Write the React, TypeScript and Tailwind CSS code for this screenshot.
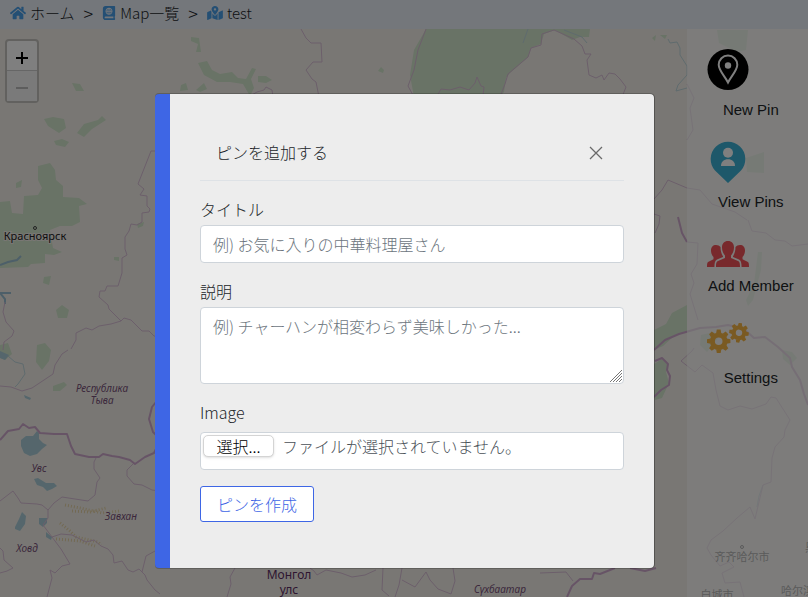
import React from "react";
import { FaHome, FaAtlas, FaMapMarkedAlt } from "react-icons/fa";

const UI = "font-['Noto_Sans_CJK_JP',sans-serif]";

const forests = [
  "M410 75 L414 50 L426 29 L590 29 L589 37 L580 37 L572 40 L555 30 L544 34 L541 44 L531 48 L528 57 L510 73 L506 78 L504 92 L500 97 L414 97 Z",
  "M38 166 L50 163 L55 170 L56 180 L63 186 L63 197 L79 198 L87 204 L79 206 L80 222 L72 226 L60 226 L50 230 L53 248 L62 252 L54 255 L45 254 L45 263 L31 264 L28 267 L0 268 L0 202 L10 201 L12 213 L23 214 L24 196 L38 195 L42 188 L38 180 Z",
  "M44 119 L53 117 L64 119 L66 128 L59 133 L48 126 Z",
  "M77 133 L84 124 L98 120 L102 116 L106 120 L92 129 L84 137 Z",
  "M54 141 L62 139 L69 142 L65 147 L56 145 Z",
  "M16 183 L22 180 L21 187 L16 188 Z",
  "M44 277 L51 276 L49 285 L43 283 Z",
  "M56 310 L62 305 L69 310 L67 318 L58 318 Z",
  "M37 345 L45 343 L51 350 L49 361 L42 370 L36 362 Z",
  "M0 345 L8 343 L12 354 L5 360 L0 358 Z",
  "M53 386 L64 382 L67 385 L60 391 L53 391 Z",
  "M72 83 L80 84 L84 91 L76 91 Z",
  "M191 37 L199 38 L201 52 L196 52 L198 44 L191 41 Z",
  "M198 63 L207 61 L212 70 L220 74 L232 72 L238 78 L246 79 L252 68 L256 69 L251 79 L254 88 L250 96 L243 84 L230 82 L217 82 L204 75 Z",
  "M258 76 L266 76 L272 80 L266 83 L258 82 Z",
  "M181 85 L186 83 L188 90 L180 91 Z M196 90 L204 83 L207 89 L200 92 Z",
  "M654 364 L662 359 L668 365 L666 372 L669 383 L662 398 L655 400 L654 397 Z",
  "M654 330 L666 324 L672 313 L687 305 L687 332 L674 336 L663 346 L654 350 Z",
  "M717 30 L748 30 L746 50 L737 52 L719 43 Z",
  "M746 158 L764 152 L764 173 L747 172 Z",
  "M758 252 L762 252 L761 270 L753 300 L748 306 L746 300 L754 284 Z",
  "M782 350 L792 352 L797 358 L790 365 L783 359 Z",
  "M701 335 L714 332 L718 338 L707 352 L700 345 Z",
  "M378 71 L381 67 L384 70 L383 73 Z M652 38 L656 35 L655 41 Z M660 35 L667 35 L665 39 Z",
  "M137 224 L144 222 L143 226 L138 228 Z M114 257 L119 257 L119 261 L114 260 Z",
];

const waters = [
  "M21 440 L26 436 L33 436 L37 431 L39 433 L39 439 L43 443 L47 445 L42 449 L37 454 L30 456 L24 453 L21 446 Z",
  "M34 479 L38 478 L46 483 L54 483 L57 486 L52 489 L47 491 L43 487 L37 485 Z",
  "M15 527 L19 519 L22 512 L26 516 L25 524 L20 531 L15 529 Z",
  "M39 518 L47 518 L47 523 L43 527 L39 524 Z",
  "M46 532 L52 537 L51 540 L46 537 Z",
  "M24 395 L31 398 L30 400 L25 398 Z",
  "M0 351 L9 355 L5 360 L0 358 Z",
];

const rivers = [
  "M0 265 L8 262 L17 260 L21 256",
  "M0 293 L5 299 L5 304 M0 293 L11 293",
];

const streams = [
  "M8 356 L15 362 L23 364 L25 374 L18 384 L15 387",
  "M564 30 L582 37 L587 43 M528 29 L523 43",
  "M668 39 L670 43 L677 42 L680 48 L680 55 L687 66 L687 75 L678 85 L676 91 L687 88",
  "M763 485 L759 496 L757 507",
];

const regionBorders = [
  "M160 151 L151 151 L138 184 L144 189 L140 195 L147 196 L147 206 L150 209 L149 212 L142 213 L142 222 L137 225 L131 224 L129 231 L125 237 L125 249 L127 255 L122 258 L122 273 L118 286 L107 286 L105 291 L100 291 L99 297 L108 305 L109 309 L121 321 L124 318 L131 320 L142 331 L149 331 L154 336 L160 337",
  "M121 321 L111 324 L99 326 L92 330 L86 328 L76 333 L76 340 L71 349",
  "M5 302 L3 312 L6 322 L14 331 L12 336 L4 342 L3 350",
  "M0 386 L11 387 L22 391 L32 388 L53 374 L55 365 L62 354 L68 350",
  "M0 501 L13 491 L18 498 L21 503 L37 504 L42 505 L48 510 L54 503 L62 497 L88 501 L95 495 L97 482 L100 478 L94 469 L94 462 L96 458",
  "M48 510 L48 518 L43 525 L52 537 L61 534 L72 535 L86 542 L94 540 L101 546 L108 549 L113 555 L114 563 L122 561 L128 570 L133 572 L139 569 L145 575 L147 580 L155 590 L160 594",
  "M52 537 L61 549 L67 559 L70 564 L62 566 L55 573 L50 570 L52 578 L47 597",
  "M134 463 L127 470 L127 476 L134 484 L142 485 L152 490 L160 491",
  "M0 548 L3 551 L4 560 L13 568 L7 571 L0 573",
  "M142 572 L146 556 L155 551",
  "M301 29 L306 38 L311 43 L321 43 L322 62 L313 62 L306 70 L312 79 L316 82 L319 97",
  "M250 96 L257 92 L264 90 L266 87 L272 90 L273 97",
  "M437 96 L441 89 L450 90 L460 87 L469 90 L475 83 L477 77 L481 86 L484 87 L483 96",
  "M500 97 L505 84 L508 74 L528 57 L531 48 L541 45 L542 34 L554 30 L574 39 L582 46 L585 54 L591 54 L587 60 L589 75 L596 78 L602 75 L604 80 L609 73 L615 74 L620 79 L626 87 L622 97",
  "M414 97 L408 86 L414 70 L418 50 L426 29",
  "M235 568 L230 577 L231 584 L227 597 M310 568 L314 571 L317 575 L326 570 L341 573 L352 577 L365 575 L376 570",
  "M383 568 L382 590 L389 596 M402 568 L399 585 L395 597 M402 580 L415 587 L426 572 L430 580 L438 589 L451 594 L455 581 L453 568",
  "M654 199 L662 190 L668 180 L687 188 M654 214 L660 216 L659 224 L655 233",
  "M540 573 L566 572 L573 581",
  "M748 220 L752 231 L766 233 L775 240 L785 241 L792 246 L808 244",
  "M681 361 L692 351 L694 348 M681 361 L695 372 L702 365 L713 373 L716 390 L720 406 L728 410 L740 406 L752 409 L766 404 L771 397 L776 398 L790 420 L785 430 L784 437 L775 447 L772 458 L771 482 L763 485 L755 519 L750 507 L737 518 L723 531 L711 540 L707 548 L711 555 L720 566 L729 562 L734 567 L722 573 L725 583 L740 582 L744 597",
  "M687 84 L694 98 L690 108 L693 130 L687 140",
  "M687 242 L698 243 L697 264 L691 274 L694 283 L690 294 L698 320",
  "M687 188 L700 190 L712 204 L735 212 L747 220",
];

const countryBorders = [
  "M0 440 L8 431 L19 429 L23 424 L29 428 L35 427 L40 433 L54 434 L67 434 L71 446 L75 454 L89 457 L99 457 L103 454 L112 456 L119 457 L130 460 L135 464 L145 457 L154 453 L157 447",
  "M156 402 L152 407 L149 419 L153 432 L156 435",
  "M630 568 L645 571 L656 568 M615 568 L600 574 L594 573 L592 579 L580 579 L572 586 L567 597",
  "M654 397 L661 390 L669 385 L670 376 L667 370 L668 364 L662 358 L655 361",
  "M654 350 L665 340 L679 334 L700 328 L716 327 L728 325 L744 329 L754 338 L765 337 L778 347 L790 358 L792 367 L800 380 L804 394 L808 405",
  "M678 217 L682 233 L687 242",
];

function MapCanvas() {
  return (
    <svg className="absolute inset-0 h-full w-full" aria-hidden="true">
      <g fill="#d2e6cc">
        {forests.map((d) => <path key={d} d={d} />)}
      </g>
      <g fill="none" stroke="#e6d3a6" strokeWidth="3" strokeDasharray="1 2">
        <path d="M65 505 L80 508 L102 513 L120 511" />
        <path d="M72 511 L90 512 L106 508" />
        <path d="M60 523 L70 531 L76 537 L98 542 L101 545" />
        <path d="M56 539 L80 541 L95 546" />
      </g>
      <g fill="#aacdd8">
        {waters.map((d) => <path key={d} d={d} />)}
      </g>
      <g fill="none" stroke="#9abfd2" strokeWidth="2">
        {rivers.map((d) => <path key={d} d={d} />)}
      </g>
      <g fill="none" stroke="#bfd6dc" strokeWidth="1">
        {streams.map((d) => <path key={d} d={d} />)}
      </g>
      <g fill="none" stroke="#d9bed6" strokeWidth="1">
        {regionBorders.map((d) => <path key={d} d={d} />)}
      </g>
      <g fill="none" stroke="#cfa9cd" strokeWidth="2" strokeLinejoin="round">
        {countryBorders.map((d) => <path key={d} d={d} />)}
      </g>
      <g fill="none" stroke="#444">
        <circle cx="35" cy="228" r="1.5" />
        <circle cx="742" cy="547" r="1.5" />
      </g>
      <g
        className="font-['Noto_Sans',sans-serif]"
        textAnchor="middle"
        stroke="#f2efe9"
        strokeWidth="2"
        style={{ paintOrder: "stroke" }}
      >
        <text x="35" y="240" fontSize="11" fill="#222">Красноярск</text>
        <g fontSize="10" fontStyle="italic" fill="#785078">
          <text x="102" y="392">Республика</text>
          <text x="102" y="404">Тыва</text>
          <text x="39" y="472">Увс</text>
          <text x="121" y="520">Завхан</text>
          <text x="27" y="552">Ховд</text>
          <text x="500" y="593">Сүхбаатар</text>
        </g>
        <g fontSize="12" fill="#5c2d62">
          <text x="289" y="579">Монгол</text>
          <text x="289" y="594">улс</text>
        </g>
      </g>
      <g className="font-['Noto_Sans_CJK_SC',sans-serif]" textAnchor="middle" fontSize="11" fill="#444">
        <text x="742" y="561">齐齐哈尔市</text>
        <text x="717" y="599">白城市</text>
        <text x="781" y="595" textAnchor="start">哈尔滨市</text>
        <text x="805" y="552" textAnchor="start">黑</text>
        <text x="-4" y="329">у</text>
      </g>
    </svg>
  );
}

function NewPinIcon() {
  return (
    <svg width="42" height="42" viewBox="0 0 42 42" aria-hidden="true">
      <circle cx="21" cy="20.500" r="20.500" fill="#000" />
      <path
        d="M21 33.500 C18 27.500 11.700 21.500 11.700 15.800 A9.300 9.300 0 0 1 30.300 15.800 C30.300 21.500 24 27.500 21 33.500Z"
        fill="none" stroke="#fff" strokeWidth="2"
      />
      <circle cx="21" cy="16.500" r="3.200" fill="#fff" />
    </svg>
  );
}

function ViewPinsIcon() {
  return (
    <svg width="42" height="42" viewBox="0 0 42 42" aria-hidden="true">
      <path d="M21 42 L8 29.500 A17.300 17.300 0 1 1 34 29.500 Z" fill="#3db0d4" />
      <circle cx="21" cy="11.800" r="5" fill="#fff" />
      <path d="M14 25 C14 20.500 17 18.200 21 18.200 S28 20.500 28 25 Z" fill="#fff" />
    </svg>
  );
}

function MembersIcon() {
  return (
    <svg width="42" height="26" viewBox="0 0 42 26" fill="#f05258" aria-hidden="true">
      <path d="M21 0 C24.700 0 27 2.600 27 6.500 C27 10 25.500 13 24 14.500 V17 L31 20 C32.500 20.700 33 22 33 26 H9 C9 22 9.500 20.700 11 20 L18 17 V14.500 C16.500 13 15 10 15 6.500 C15 2.600 17.300 0 21 0Z" />
      <path d="M9 4 C11 4 12.500 4.800 13.500 6 C13.500 10 14.500 12.800 16 15.200 V16 L10 18.500 C8 19.400 7.500 22 7.400 26 H0 C0 22.500 .300 21.500 1.500 20.800 L6.500 18.300 V16 C5 14.500 4 12 4 9.500 C4 6 6 4 9 4Z" />
      <path d="M33 4 C31 4 29.500 4.800 28.500 6 C28.500 10 27.500 12.800 26 15.200 V16 L32 18.500 C34 19.400 34.500 22 34.600 26 H42 C42 22.500 41.700 21.500 40.500 20.800 L35.500 18.300 V16 C37 14.500 38 12 38 9.500 C38 6 36 4 33 4Z" />
    </svg>
  );
}

const teeth = [0, 45, 90, 135, 180, 225, 270, 315];

function Gear({ transform }: { transform: string }) {
  return (
    <g transform={transform}>
      <circle r="6.300" fill="none" stroke="#f5b545" strokeWidth="5" />
      {teeth.map((a) => (
        <path key={a} d="M-2.600 -8 L-1.900 -11.700 H1.900 L2.600 -8Z" fill="#f5b545" transform={`rotate(${a})`} />
      ))}
    </g>
  );
}

function SettingsIcon() {
  return (
    <svg width="42" height="30" viewBox="0 0 42 30" aria-hidden="true">
      <Gear transform="translate(11.700 18.200)" />
      <Gear transform="translate(32 9.800) rotate(8) scale(.84)" />
    </svg>
  );
}

function SideItem({ icon, label, box }: { icon: React.ReactNode; label: string; box: string }) {
  return (
    <button type="button" className="flex w-[88px] flex-col whitespace-nowrap text-left">
      <span className={`flex ${box}`}>{icon}</span>
      <span className="w-full text-center leading-[22px]">{label}</span>
    </button>
  );
}

const field = "block w-full rounded border border-[#ced4da] bg-white px-3 leading-6 text-[#212529] placeholder:text-[#6c757d] placeholder:opacity-100";

export default function App() {
  return (
    <div className={`relative flex min-h-screen flex-col overflow-hidden bg-[#f2efe9] text-[#212529] ${UI}`}>
      <MapCanvas />

      <header className="relative h-[29px] bg-[#e9eef6]">
        <nav aria-label="breadcrumb" className="flex h-[26px] items-center gap-[9px] px-[10px] text-[15px] font-light">
          <a href="#home" className="flex items-center gap-1">
            <FaHome className="h-4 w-4 text-[#489fe8]" />ホーム
          </a>
          <span className="text-lg">&gt;</span>
          <a href="#maps" className="flex items-center gap-1">
            <FaAtlas className="h-[14px] w-[14px] text-[#489fe8]" />Map一覧
          </a>
          <span className="text-lg">&gt;</span>
          <a href="#test" className="flex items-center gap-1">
            <FaMapMarkedAlt className="h-[14px] w-4 text-[#489fe8]" />test
          </a>
        </nav>
      </header>

      <main className="relative flex flex-1 justify-between">
        <div className="pt-[10px] pl-[5px]">
          <div className="w-[34px] rounded border-2 border-[#c4c2be] bg-white">
            <button type="button" aria-label="Zoom in" className="flex h-[30px] w-full items-center justify-center border-b border-[#ccc] pt-1 text-black">
              <svg width="14" height="14" aria-hidden="true"><path d="M7 1v12M1 7h12" stroke="currentColor" strokeWidth="2" /></svg>
            </button>
            <button type="button" disabled aria-label="Zoom out" className="flex h-[30px] w-full items-center justify-center bg-[#f4f4f4] text-[#bbb]">
              <svg width="14" height="14" aria-hidden="true"><path d="M1 9h12" stroke="currentColor" strokeWidth="2" /></svg>
            </button>
          </div>
        </div>
        <aside className="w-[15%] min-w-[121px] bg-white/60 pt-5 pl-5 font-['Liberation_Sans',Arial,sans-serif] text-[15px]">
          <div className="flex flex-col gap-5">
            <SideItem icon={<NewPinIcon />} label="New Pin" box="h-[50px] items-start" />
            <SideItem icon={<ViewPinsIcon />} label="View Pins" box="h-[50px] items-start" />
            <SideItem icon={<MembersIcon />} label="Add Member" box="h-[42px] items-center" />
            <SideItem icon={<SettingsIcon />} label="Settings" box="h-[50px] items-start pt-[6px]" />
          </div>
        </aside>
      </main>

      <div className="absolute inset-0 flex items-start justify-center bg-black/50 pt-[94px] pl-px">
        <div role="dialog" aria-modal="true" aria-labelledby="dialog-title" className="w-full max-w-[499px] rounded border-l-[15px] border-[#3e66e5] bg-[#ededed] p-[30px] font-light shadow-[1px_0_0_0_rgba(0,0,0,0.3),0_1px_0_0_rgba(0,0,0,0.2),0_-1px_0_0_rgba(0,0,0,0.2)]">
          <div className="flex items-center justify-between border-b border-[#dee2e6] p-4">
            <h1 id="dialog-title" className="leading-6">ピンを追加する</h1>
            <button type="button" aria-label="閉じる" className="flex h-6 w-6 items-center justify-center pt-px text-[#6a6a6a]">
              <svg width="14" height="14" aria-hidden="true"><path d="M1 1l12 12M13 1L1 13" stroke="currentColor" strokeWidth="1.300" /></svg>
            </button>
          </div>
          <form className="flex flex-col gap-4 py-4" onSubmit={(e) => e.preventDefault()}>
            <div className="flex flex-col gap-1">
              <label htmlFor="title" className="leading-6">タイトル</label>
              <input id="title" type="text" placeholder="例) お気に入りの中華料理屋さん" className={`${field} h-[38px]`} />
            </div>
            <div className="flex flex-col gap-1">
              <label htmlFor="description" className="leading-6">説明</label>
              <div className="relative">
                <textarea id="description" placeholder="例) チャーハンが相変わらず美味しかった..." className={`${field} h-[77px] resize-none py-[6px]`} />
                <svg className="pointer-events-none absolute right-px bottom-px" width="14" height="14" aria-hidden="true">
                  <path d="M1 13L13 1M4 13L13 4M7 13L13 7M10 13L13 10" stroke="#777" />
                </svg>
              </div>
            </div>
            <div className="flex flex-col gap-2">
              <label htmlFor="image" className="leading-6">Image</label>
              <div className="relative h-[38px] rounded border border-[#ced4da] bg-white text-[#495057]">
                <div className="flex items-center gap-2 p-[2px]">
                  <span className="w-[71px] rounded-[5px] border border-[#d4d4d4] bg-white text-center leading-5 text-black shadow-sm">選択...</span>
                  <span className="leading-5">ファイルが選択されていません。</span>
                </div>
                <input id="image" type="file" className="absolute inset-0 h-full w-full opacity-0" />
              </div>
            </div>
            <button type="submit" className="h-9 w-[114px] rounded-[3px] border border-[#3e66e5] bg-white text-[#3e66e5]">ピンを作成</button>
          </form>
        </div>
      </div>
    </div>
  );
}
